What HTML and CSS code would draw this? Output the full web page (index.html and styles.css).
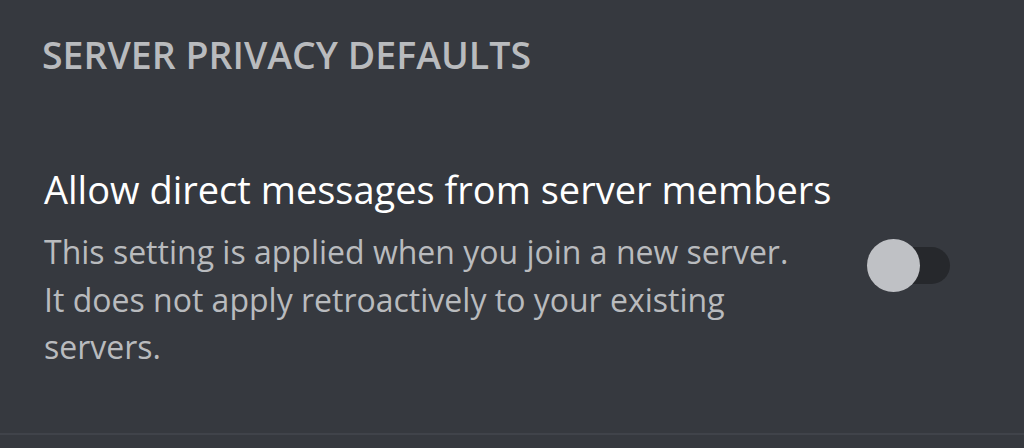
FILE: index.html
```html
<!DOCTYPE html>
<html lang="en">
<head>
    <meta charset="UTF-8">
    <title>Privacy Settings</title>
    <link rel="stylesheet" href="styles.css">
</head>
<body>
    <div class="settings">
        <h2 class="section-title">SERVER PRIVACY DEFAULTS</h2>

        <div class="setting-row">
            <div class="setting-text">
                <div class="setting-label">Allow direct messages from server members</div>
                <p class="setting-desc">This setting is applied when you join a new server.<br>It does not apply retroactively to your existing<br>servers.</p>
            </div>
            <div class="toggle">
                <span class="toggle-knob"></span>
            </div>
        </div>

        <div class="divider"></div>
    </div>
</body>
</html>
```

FILE: styles.css
```css
body {
    margin: 0;
    padding: 0;
    background: #36393f;
    font-family: "Open Sans", "Noto Sans", sans-serif;
}

.settings {
    width: 1024px;
    height: 448px;
    box-sizing: border-box;
    padding-top: 30px;
    display: flex;
    flex-direction: column;
}

.section-title {
    margin: 0 0 0 42px;
    color: #b9bbbe;
    font-size: 37.5px;
    font-weight: 600;
    line-height: 50px;
}

.setting-row {
    display: flex;
    align-items: center;
    justify-content: space-between;
    margin-top: 87px;
    padding: 0 74px 0 44px;
}

.setting-label {
    color: #ffffff;
    font-size: 38px;
    line-height: 44px;
}

.setting-desc {
    margin: 17px 0 0 0;
    color: #b9bbbe;
    font-size: 32px;
    line-height: 47.5px;
}

.toggle {
    position: relative;
    width: 80px;
    height: 37px;
    border-radius: 19px;
    background: #26282c;
    margin-bottom: 6px;
}

.toggle-knob {
    position: absolute;
    left: -3px;
    top: -8px;
    width: 53px;
    height: 53px;
    border-radius: 50%;
    background: #bfc1c5;
}

.divider {
    margin-top: auto;
    margin-bottom: 13px;
    height: 2px;
    background: #40434a;
}
```
